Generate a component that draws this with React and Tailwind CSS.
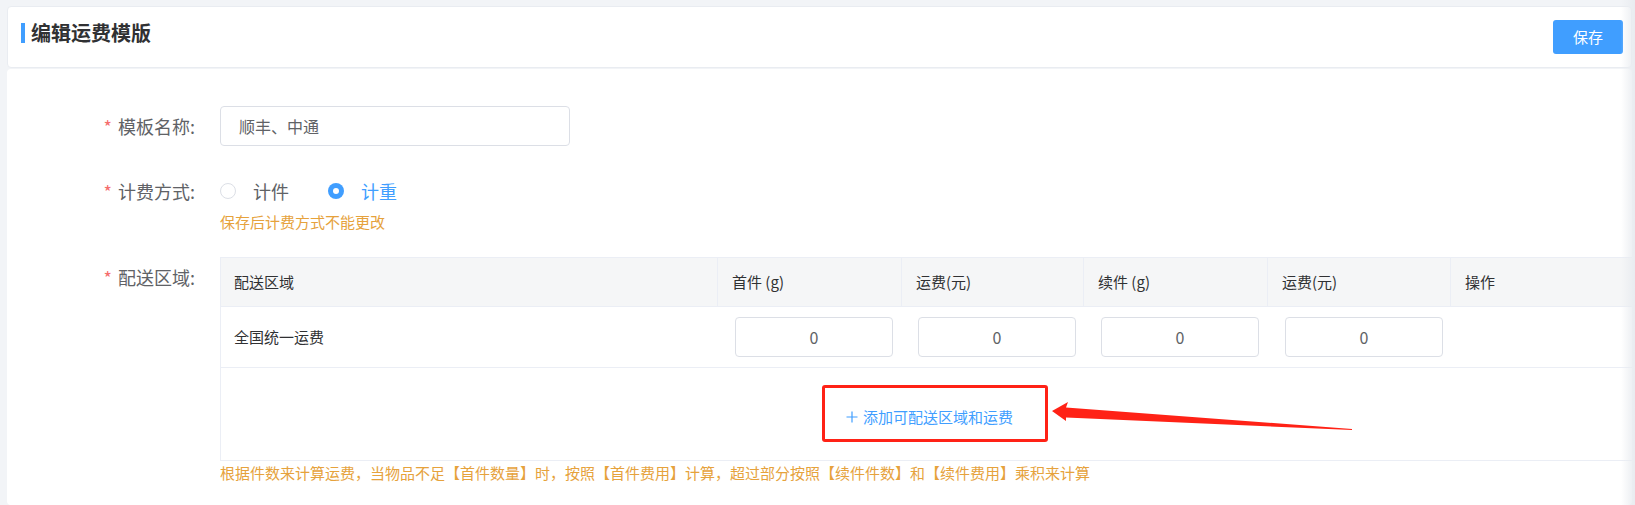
import React from "react";

const FONT = { fontFamily: '"Noto Sans CJK SC", "Noto Sans", sans-serif' };

function Label({ children, className = "" }) {
  return (
    <div className={"w-[213px] shrink-0 pr-[25px] text-right text-[18px] text-[#606266] " + className}>
      <span className="mr-[6px] text-[#f56c6c]">*</span>
      {children}:
    </div>
  );
}

function Radio({ checked, label }) {
  return (
    <div className="flex items-center">
      {checked ? (
        <span className="flex h-[16px] w-[16px] items-center justify-center rounded-full bg-[#409eff]">
          <span className="h-[6px] w-[6px] rounded-full bg-white" />
        </span>
      ) : (
        <span className="h-[16px] w-[16px] rounded-full border border-[#dcdfe6] bg-white" />
      )}
      <span className={"ml-[17px] text-[18px] " + (checked ? "text-[#409eff]" : "text-[#606266]")}>{label}</span>
    </div>
  );
}

function NumInput() {
  return (
    <div className="flex h-[40px] w-[158px] items-center justify-center rounded-[4px] border border-[#dcdfe6] bg-white text-[16px] text-[#606266]">
      0
    </div>
  );
}

export default function App() {
  const headers = ["首件 (g)", "运费(元)", "续件 (g)", "运费(元)", "操作"];
  return (
    <div style={FONT} className="relative flex min-h-[505px] flex-col bg-[#f2f4f7] pl-[7px] pr-[3px] pt-[6px]">
      {/* header card */}
      <div className="flex h-[62px] items-start justify-between rounded-[4px] border border-[#e9ecf1] bg-white">
        <div className="flex items-center pl-[13px] pt-[16px]">
          <span className="h-[20px] w-[4px] bg-[#409eff]" />
          <span className="ml-[6px] text-[20px] font-bold leading-[20px] text-[#303133]">编辑运费模版</span>
        </div>
        <button className="mr-[8px] mt-[13px] h-[34px] w-[70px] rounded-[3px] bg-[#409eff] text-[15px] text-white">保存</button>
      </div>

      {/* body */}
      <div className="mt-[1px] flex-1 overflow-hidden rounded-[4px] bg-white pt-[37px]">
        {/* row 1 */}
        <div className="mb-[25px] flex h-[40px] items-center">
          <Label className="leading-[40px]">模板名称</Label>
          <div className="flex h-[40px] w-[350px] items-center rounded-[4px] border border-[#dcdfe6] pl-[18px] text-[16px] text-[#606266]">
            顺丰、中通
          </div>
        </div>

        {/* row 2 */}
        <div className="mb-[25px] flex items-start">
          <Label className="leading-[40px]">计费方式</Label>
          <div className="flex flex-col">
            <div className="flex h-[40px] items-center gap-[39px]">
              <Radio label="计件" />
              <Radio checked label="计重" />
            </div>
            <div className="mt-[1px] text-[15px] leading-[20px] text-[#e6a23c]">保存后计费方式不能更改</div>
          </div>
        </div>

        {/* row 3 */}
        <div className="flex items-start">
          <Label className="leading-[40px]">配送区域</Label>
          <div className="flex min-w-0 flex-1 flex-col">
            <div className="border-b border-l border-t border-[#ebeef5] text-[15px] text-[#303133]">
              <div className="grid h-[49px] grid-cols-[497px_184px_182px_184px_183px_1fr] border-b border-[#ebeef5] bg-[#f5f6f7]">
                <div className="flex items-center border-r border-[#ebeef5] pl-[13px]">配送区域</div>
                {headers.map((h, i) => (
                  <div key={i} className={"flex items-center pl-[14px] " + (i < 4 ? "border-r border-[#ebeef5]" : "")}>
                    {h}
                  </div>
                ))}
              </div>
              <div className="grid h-[61px] grid-cols-[497px_184px_182px_184px_183px_1fr] border-b border-[#ebeef5]">
                <div className="flex items-center pl-[13px]">全国统一运费</div>
                <div className="flex items-center pl-[17px]"><NumInput /></div>
                <div className="flex items-center pl-[16px]"><NumInput /></div>
                <div className="flex items-center pl-[17px]"><NumInput /></div>
                <div className="flex items-center pl-[17px]"><NumInput /></div>
                <div />
              </div>
              <div className="flex h-[92px] justify-center pt-[39px]">
                <span className="relative ml-[6px] flex h-[20px] items-center text-[15px] leading-[20px] text-[#409eff]">
                  <svg width="12" height="12" viewBox="0 0 12 12" className="mr-[5px]">
                    <path d="M6 0.5V11.5M0.5 6H11.5" stroke="#409eff" strokeWidth="1.2" fill="none" />
                  </svg>
                  添加可配送区域和运费
                  <span className="absolute bottom-[-15px] left-[-24px] right-[-35px] top-[-22px] rounded-[3px] border-[3px] border-[#ff2216]" />
                </span>
              </div>
            </div>
            <div className="mt-[2px] text-[15px] leading-[20px] text-[#e6a23c]">
              根据件数来计算运费，当物品不足【首件数量】时，按照【首件费用】计算，超过部分按照【续件件数】和【续件费用】乘积来计算
            </div>
          </div>
        </div>
      </div>

      {/* annotation arrow */}
      <svg className="absolute left-[1045px] top-[397px]" width="315" height="36" viewBox="0 0 315 36">
        <polygon points="7,14 23,5 21,10.5 307,32 307,33 21,20.5 21,24" fill="#ff2216" />
      </svg>

      {/* right edge shade */}
      <div className="pointer-events-none absolute bottom-0 right-0 top-0 w-[14px] bg-gradient-to-r from-transparent to-[#e9ecf0]" />
    </div>
  );
}
